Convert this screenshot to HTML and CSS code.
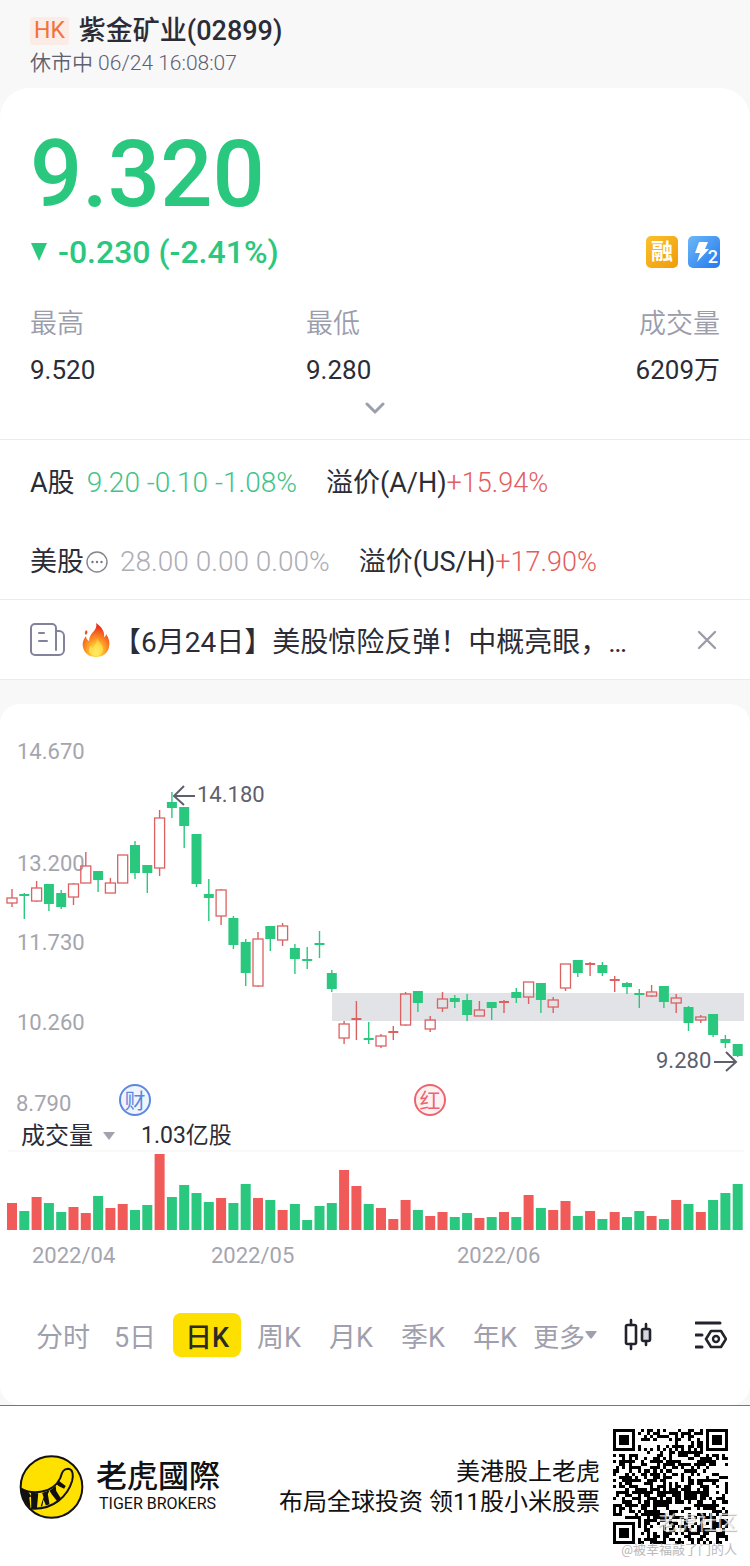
FILE: index.html
```
<!DOCTYPE html>
<html lang="zh-CN">
<head>
  <meta charset="UTF-8" />
  <meta name="viewport" content="width=device-width, initial-scale=1.0"/>
  <title>紫金矿业(02899)</title>
  <link rel="stylesheet" href="styles.css">
</head>
<body>
  <header class="top">
    <div class="top-title">
      <span class="market">HK</span>
      <h1>紫金矿业(02899)</h1>
    </div>
    <p class="top-status">休市中 06/24 16:08:07</p>
  </header>

  <main>
    <section class="card quote">
      <div class="price">9.320</div>
      <div class="change-row">
        <svg class="down" viewBox="0 0 18 20" aria-hidden="true"><path d="M1 1h16L9 19z" fill="#2ac77e"/></svg>
        <span class="change">-0.230 (-2.41%)</span>
        <span class="badge badge-margin">融</span>
        <span class="badge badge-level">
          <svg viewBox="0 0 32 32" aria-hidden="true"><path d="M11 6h9l-3 7h4L9 26l3-9H7z" fill="#fff"/></svg>
          <span class="badge-num">2</span>
        </span>
      </div>

      <dl class="stats">
        <div><dt>最高</dt><dd>9.520</dd></div>
        <div><dt>最低</dt><dd>9.280</dd></div>
        <div><dt>成交量</dt><dd>6209万</dd></div>
      </dl>
      <button class="expand" type="button" aria-label="展开">
        <svg viewBox="0 0 20 12" aria-hidden="true"><path d="M2 2l8 8 8-8" fill="none" stroke="#9b9fac" stroke-width="3" stroke-linecap="round" stroke-linejoin="round"/></svg>
      </button>
    </section>

    <section class="related">
      <div class="related-row">
        <span>A股</span>
        <span class="related-price green">9.20 -0.10 -1.08%</span>
        <span>溢价(A/H)<span class="red">+15.94%</span></span>
      </div>
      <div class="related-row">
        <span>美股</span>
        <svg class="dots" viewBox="0 0 22 22" aria-hidden="true">
          <circle cx="11" cy="11" r="10" fill="none" stroke="#85858c" stroke-width="1.4"/>
          <circle cx="6.5" cy="11" r="1.2" fill="#77777e"/><circle cx="11" cy="11" r="1.2" fill="#77777e"/><circle cx="15.5" cy="11" r="1.2" fill="#77777e"/>
        </svg>
        <span class="related-price grey">28.00 0.00 0.00%</span>
        <span>溢价(US/H)<span class="red">+17.90%</span></span>
      </div>
    </section>

    <section class="news">
      <svg class="news-icon" viewBox="0 0 35 34" aria-hidden="true">
        <g fill="none" stroke="#82839a" stroke-width="2" stroke-linecap="round">
          <path d="M26 8V5a4 4 0 0 0-4-4H5a4 4 0 0 0-4 4v23a4 4 0 0 0 4 4h24a5 5 0 0 0 5-5V13a5 5 0 0 0-5-5h-3v19"/>
          <path d="M9 10h5M9 18h8"/>
        </g>
      </svg>
      <svg class="flame" viewBox="0 0 28 36" aria-hidden="true">
        <defs>
          <radialGradient id="fire" cx="50%" cy="85%" r="75%">
            <stop offset="0" stop-color="#fff36a"/>
            <stop offset="0.3" stop-color="#ffc22e"/>
            <stop offset="0.65" stop-color="#fb7a22"/>
            <stop offset="1" stop-color="#e8321b"/>
          </radialGradient>
        </defs>
        <path d="M14 1c6 4 9 9 8 14 1 0 2-1 2-3 3 4 4 8 3 13-1 6-6 10-13 10S2 31 1 25c-1-5 1-8 3-11 0 2 1 4 3 5 0-4 2-7 5-10 2-3 3-5 2-8z" fill="url(#fire)"/>
        <path d="M4 8c2 1 2 3 0 5-2-2-1-3 0-5z" fill="#f0532a"/>
        <path d="M15 16c1 4 7 7 6 13-1 3-4 5-7 5s-7-2-7-6c0-2 1-4 2-5 0 2 1 3 2 3 2-3 4-5 4-10z" fill="#ffe95a" opacity="0.6"/>
      </svg>
      <a class="news-title" href="#">【6月24日】美股惊险反弹！中概亮眼，…</a>
      <button class="close" type="button" aria-label="关闭">
        <svg viewBox="0 0 20 20" aria-hidden="true"><path d="M2 2l16 16M18 2L2 18" stroke="#9d9da8" stroke-width="2.4" stroke-linecap="round"/></svg>
      </button>
    </section>

    <section class="card chart">
      <svg class="kline" viewBox="0 704 750 418" role="img" aria-label="日K">
        <rect x="332" y="993" width="412" height="28" fill="#e2e3e7"/>
        <g class="axis">
          <text x="17" y="759">14.670</text>
          <text x="17" y="871">13.200</text>
          <text x="17" y="950">11.730</text>
          <text x="17" y="1030">10.260</text>
          <text x="16" y="1111">8.790</text>
        </g>
        <g id="candles"></g>
        <g class="peak">
          <text x="197" y="802">14.180</text>
          <text x="656" y="1068">9.280</text>
          <path d="M195 796h-21M184 786l-10 10 10 9M714 1062h22M726 1052l10 10-10 9"/>
        </g>
        <g class="event event-report">
          <circle cx="135" cy="1100" r="15"/>
          <text x="135" y="1108">财</text>
        </g>
        <g class="event event-dividend">
          <circle cx="430" cy="1100" r="15"/>
          <text x="430" y="1108">红</text>
        </g>
      </svg>
      <div class="volume-head">
        <button class="volume-type" type="button">成交量
          <svg viewBox="0 0 12 8" aria-hidden="true"><path d="M0 0h12L6 8z" fill="#a3a3ad"/></svg>
        </button>
        <span class="volume-total">1.03亿股</span>
      </div>
      <svg class="volume" viewBox="0 0 750 120" role="img" aria-label="成交量">
        <path d="M8 1h736" stroke="#f3f3f5" stroke-width="1"/>
        <g id="bars"></g>
        <g class="axis">
          <text x="32" y="113">2022/04</text>
          <text x="211" y="113">2022/05</text>
          <text x="457" y="113">2022/06</text>
        </g>
      </svg>

      <nav class="periods">
        <button type="button">分时</button>
        <button type="button">5日</button>
        <button type="button" class="active">日K</button>
        <button type="button">周K</button>
        <button type="button">月K</button>
        <button type="button">季K</button>
        <button type="button">年K</button>
        <button type="button" class="more">更多<svg viewBox="0 0 12 8" aria-hidden="true"><path d="M1 0h10q1 0 .5 1L7 7q-1 1-2 0L.5 1Q0 0 1 0z" fill="#9f9fae"/></svg></button>
        <button type="button" aria-label="K线样式">
          <svg class="tool" viewBox="0 0 32 36" aria-hidden="true">
            <g fill="none" stroke="#23232d" stroke-width="2.6" stroke-linecap="round">
              <rect x="3" y="8" width="10" height="19" rx="1.5"/>
              <path d="M8 3v5M8 27v5M23 7v4M23 24v4"/>
              <rect x="19" y="12" width="8" height="12" rx="1.5" fill="#d6d6de"/>
            </g>
          </svg>
        </button>
        <button type="button" aria-label="设置">
          <svg class="tool" viewBox="0 0 32 36" aria-hidden="true">
            <g fill="none" stroke="#23232d" stroke-width="3" stroke-linecap="round" stroke-linejoin="round">
              <path d="M1 6h24M1 18h6M1 30h6"/>
              <path d="M16 14h10l5 8-5 8H16l-5-8z" stroke-width="2.6"/>
              <circle cx="21" cy="22" r="3" stroke-width="2.4"/>
            </g>
          </svg>
        </button>
      </nav>
    </section>
  </main>

  <footer class="brand">
    <svg class="logo" viewBox="58 189 196 198" aria-hidden="true">
      <circle cx="156" cy="288" r="93" fill="#ffe100" stroke="#111" stroke-width="6"/>
      <path d="M64 293C98 312 160 308 182 262C187 250 188 233 206 233C222 235 222 254 218 270C206 312 164 358 94 353" fill="none" stroke="#111" stroke-width="6"/>
      <path d="M64 293l22 9 9 14-6 4 4 32C74 336 64 316 64 293zM94 305l22 2-4 47-17-1zM128 306l22-8-5 12 5 30-11 4-7-18-4 20-5 1 9-28zM150 299l19-14 1 14 14 23-11 9-17-22zM172 280l6-11 5 4 16 12-5 8-17-8z" fill="#111"/>
    </svg>
    <div class="brand-name">
      <strong lang="zh-Hant">老虎國際</strong>
      <span>TIGER BROKERS</span>
    </div>
    <p class="slogan">美港股上老虎<br>布局全球投资 领11股小米股票</p>
    <div class="qr">
      <svg viewBox="0 0 37 37" shape-rendering="crispEdges" role="img" aria-label="二维码"><path id="qrcode"/></svg>
      <span class="mark-name">老虎社区</span>
      <span class="mark-user">@被幸福敲了门的人</span>
    </div>
  </footer>

  <script src="chart.js"></script>
</body>
</html>
```
FILE: styles.css
```
* {
  margin: 0;
  padding: 0;
  box-sizing: border-box;
}

body {
  font-family: Roboto, "Noto Sans CJK SC", sans-serif;
  font-size: 27px;
  background: #f8f8f9;
  color: #2b2c36;
}

button {
  font: inherit;
  color: inherit;
  background: none;
  border: none;
  cursor: pointer;
}

svg {
  display: block;
}

.green {
  color: #42c38a;
}

.red {
  color: #e35d5d;
}

.grey {
  color: #adadb5;
}

/* Header */
.top {
  padding: 14px 30px 10px;
}

.top-title {
  display: flex;
  align-items: center;
  gap: 10px;
  height: 34px;
}

.top-title h1 {
  font-size: 27px;
  line-height: 34px;
  font-weight: 500;
}

.market {
  padding: 0 4px;
  font-size: 23px;
  line-height: 28px;
  color: #f4713c;
  background: #fbece6;
  border-radius: 3px;
}

.top-status {
  font-size: 21px;
  line-height: 30px;
  font-weight: 350;
  color: #5f6070;
}

/* Quote */
.card {
  background: #fff;
  border-radius: 30px 30px 0 0;
}

.quote {
  padding: 32px 30px 25px;
  border-bottom: 1px solid #ececee;
}

.price {
  font-size: 92px;
  line-height: 110px;
  font-weight: 500;
  color: #2ac77e;
}

.change-row {
  display: flex;
  align-items: center;
  gap: 10px;
  height: 44px;
}

.down {
  width: 18px;
  height: 20px;
}

.change {
  flex: 1;
  font-size: 32px;
  font-weight: 500;
  color: #2ac77e;
}

.badge {
  position: relative;
  width: 32px;
  height: 32px;
  border-radius: 5px;
  color: #fff;
  text-align: center;
}

.badge-margin {
  font-size: 22px;
  line-height: 32px;
  font-weight: 700;
  background: linear-gradient(135deg, #fbc02b, #f09b0b);
}

.badge-level {
  background: linear-gradient(135deg, #6cb8f8, #2478ee);
}

.badge-num {
  position: absolute;
  right: 2px;
  bottom: 2px;
  font-size: 18px;
  line-height: 18px;
  font-weight: 500;
}

.stats {
  display: flex;
  padding-top: 28px;
}

.stats div {
  flex: 2;
}

.stats div:last-child {
  flex: 1;
  text-align: right;
}

.stats dt {
  line-height: 44px;
  font-weight: 350;
  color: #9c9dab;
}

.stats dd {
  font-size: 26px;
  line-height: 48px;
}

.expand {
  display: block;
  margin: 8px auto 0;
}

.expand svg {
  width: 20px;
  height: 12px;
}

/* Related listings */
.related {
  background: #fff;
  padding-top: 1px;
  border-bottom: 1px solid #ececee;
}

.related-row {
  display: flex;
  align-items: center;
  height: 79px;
  padding: 4px 30px 0;
  line-height: 40px;
}

.related-price {
  margin: 0 29px 0 12px;
  font-size: 28px;
  font-weight: 300;
}

.related-row .red {
  font-weight: 300;
}

.dots {
  width: 22px;
  height: 22px;
  margin-left: 2px;
}

/* News */
.news {
  display: flex;
  align-items: center;
  height: 80px;
  padding: 0 33px 0 30px;
  background: #fff;
  border-bottom: 1px solid #ececee;
}

.news-icon {
  width: 35px;
  height: 34px;
}

.flame {
  width: 28px;
  height: 36px;
  margin: 0 3px 0 17px;
}

.news-title {
  flex: 1;
  font-size: 28px;
  color: inherit;
  text-decoration: none;
  white-space: nowrap;
}

.close svg {
  width: 20px;
  height: 20px;
}

/* Chart */
.chart {
  margin-top: 24px;
  padding-bottom: 48px;
  border-radius: 20px;
}

.kline,
.volume {
  width: 100%;
}

.axis text {
  font-size: 22px;
  fill: #a5a5ae;
}

.peak text {
  font-size: 22px;
  fill: #5e5f6d;
}

.peak path {
  fill: none;
  stroke: #5e5f6d;
  stroke-width: 2;
}

.event circle {
  stroke-width: 2;
}

.event text {
  font-size: 21px;
  text-anchor: middle;
}

.event-report circle {
  fill: #eff5fe;
  stroke: #5c87df;
}

.event-report text {
  fill: #5c87df;
}

.event-dividend circle {
  fill: #fef1f2;
  stroke: #ec6470;
}

.event-dividend text {
  fill: #ec6470;
}

.volume-head {
  display: flex;
  align-items: center;
  gap: 26px;
  height: 28px;
  padding-left: 21px;
  font-size: 24px;
  line-height: 28px;
}

.volume-total {
  font-size: 23px;
}

.volume-type {
  display: flex;
  align-items: center;
  gap: 10px;
}

.volume-type svg,
.more svg {
  width: 12px;
  height: 8px;
}

.periods {
  display: grid;
  grid-template-columns: repeat(10, 1fr);
  padding: 43px 3px 0 27px;
}

.periods button {
  display: flex;
  align-items: center;
  justify-content: center;
  height: 44px;
  margin: 0 2px;
  border-radius: 8px;
  white-space: nowrap;
  color: #9f9fae;
}

.periods .active {
  background: #fde000;
  color: #2b2c22;
  font-weight: 500;
}

.periods .more {
  justify-content: flex-start;
  font-size: 26px;
}

.tool {
  width: 32px;
  height: 36px;
}

/* Footer */
.brand {
  display: flex;
  align-items: center;
  padding: 23px 22px 22px 19px;
  background: #fff;
  border-top: 1px solid #77777a;
  color: #111;
}

.logo {
  width: 65px;
  height: 66px;
}

.brand-name {
  display: flex;
  flex-direction: column;
  margin-left: 12px;
}

.brand-name strong {
  font-family: Roboto, "Noto Sans CJK TC", sans-serif;
  font-size: 31px;
  line-height: 34px;
  font-weight: 500;
}

.brand-name span {
  padding-left: 3px;
  font-size: 16px;
  line-height: 20px;
}

.slogan {
  flex: 1;
  margin-right: 13px;
  font-size: 24px;
  line-height: 30px;
  text-align: right;
}

.qr {
  position: relative;
  width: 115px;
  height: 115px;
}

.mark-name,
.mark-user {
  position: absolute;
  white-space: nowrap;
}

.mark-name {
  right: -9px;
  bottom: 8px;
  font-size: 20px;
  line-height: 26px;
  color: rgba(255, 255, 255, 0.7);
  text-shadow: 1px 1px 1px rgba(120, 120, 120, 0.5);
}

.mark-user {
  right: -9px;
  bottom: -16px;
  font-size: 13px;
  line-height: 20px;
  color: #b9b9b9;
}
```
FILE: chart.js
```
// dir, high, low, body top, body bottom, volume
const days = [
  ['r', 889, 907, 898, 903, 27], ['g', 893, 919, 894, 896, 19], ['r', 881, 902, 888, 901, 33],
  ['g', 884, 911, 884, 904, 27], ['g', 890, 909, 893, 907, 18], ['r', 883, 905, 884, 897, 23],
  ['r', 852, 883, 866, 883, 17], ['g', 871, 892, 871, 880, 34], ['r', 878, 893, 883, 893, 22],
  ['r', 855, 883, 855, 883, 26], ['g', 841, 879, 845, 873, 20], ['g', 865, 893, 865, 873, 25],
  ['r', 810, 876, 818, 868, 76], ['g', 792, 818, 802, 808, 33], ['g', 807, 848, 807, 826, 45],
  ['g', 834, 887, 834, 884, 37], ['g', 879, 921, 894, 898, 28], ['r', 889, 925, 890, 916, 32],
  ['g', 916, 949, 918, 945, 27], ['g', 939, 986, 942, 973, 46], ['r', 932, 987, 939, 986, 32],
  ['g', 926, 951, 926, 939, 30], ['r', 923, 946, 926, 940, 20], ['g', 944, 974, 948, 959, 26],
  ['g', 947, 969, 959, 961, 10], ['g', 931, 958, 943, 945, 24], ['g', 970, 992, 973, 989, 27],
  ['r', 1021, 1044, 1024, 1038, 60], ['r', 1001, 1040, 1018, 1020, 44], ['g', 1022, 1044, 1038, 1040, 26],
  ['r', 1034, 1048, 1036, 1046, 22], ['r', 1026, 1040, 1031, 1033, 11], ['r', 992, 1026, 994, 1025, 30],
  ['g', 991, 1012, 991, 1003, 20], ['r', 1016, 1032, 1020, 1029, 14], ['r', 992, 1012, 999, 1008, 18],
  ['g', 995, 1008, 998, 1002, 13], ['g', 994, 1021, 1000, 1015, 17], ['r', 1001, 1016, 1010, 1016, 12],
  ['g', 1002, 1020, 1002, 1008, 13], ['r', 1000, 1013, 1001, 1003, 18], ['g', 988, 1003, 992, 998, 13],
  ['r', 982, 1004, 982, 997, 35], ['g', 983, 1013, 983, 1000, 22], ['r', 997, 1013, 1000, 1007, 20],
  ['r', 964, 991, 964, 988, 29], ['g', 960, 977, 960, 973, 14], ['r', 962, 976, 963, 965, 19],
  ['g', 962, 976, 965, 973, 11], ['r', 976, 992, 979, 981, 18], ['g', 982, 994, 983, 987, 13],
  ['g', 989, 1008, 993, 995, 19], ['r', 985, 997, 992, 996, 14], ['g', 986, 1008, 986, 1002, 11],
  ['r', 994, 1013, 998, 1003, 30], ['g', 1006, 1031, 1007, 1023, 26], ['r', 1015, 1023, 1017, 1020, 18],
  ['g', 1014, 1037, 1014, 1035, 30], ['g', 1035, 1048, 1039, 1043, 37], ['g', 1044, 1057, 1044, 1056, 46]
];

const green = '#2ac77e';
const red = '#f05a58';
const redLine = '#dc6161';
let candles = '';
let bars = '';

days.forEach(([dir, high, low, top, bottom, vol], i) => {
  const x = 12 + i * 12.3;
  const flat = bottom - top < 3;
  if (dir === 'g' || flat) {
    const color = dir === 'g' ? green : redLine;
    candles += `<path d="M${x} ${high}V${low}" stroke="${color}" stroke-width="1.4"/>`;
    candles += `<rect x="${x - 5}" y="${top}" width="10" height="${bottom - top}" fill="${color}"/>`;
  } else {
    // hollow body, wick only outside of it
    candles += `<path d="M${x} ${high}V${top}M${x} ${bottom}V${low}" stroke="${redLine}" stroke-width="1.4"/>`;
    candles += `<rect x="${x - 5}" y="${top}" width="10" height="${bottom - top}" fill="none" stroke="${redLine}" stroke-width="1.3"/>`;
  }
  bars += `<rect x="${x - 5}" y="${80 - vol}" width="10" height="${vol}" fill="${dir === 'g' ? green : red}"/>`;
});

document.getElementById('candles').innerHTML = candles;
document.getElementById('bars').innerHTML = bars;

// QR modules
const size = 37;

function finder(x, y) {
  const d = Math.max(Math.abs(x - 3), Math.abs(y - 3));
  return d !== 2 && d < 4;
}

let seed = 2899;
let path = '';
for (let y = 0; y < size; y++) {
  for (let x = 0; x < size; x++) {
    seed = (seed * 1103515245 + 12345) % 2147483648;
    let dark = seed / 2147483648 > 0.5;
    if (x < 8 && y < 8) dark = finder(x, y);
    else if (x > 28 && y < 8) dark = finder(x - 30, y);
    else if (x < 8 && y > 28) dark = finder(x, y - 30);
    else if (Math.abs(x - 30) < 3 && Math.abs(y - 30) < 3) dark = Math.max(Math.abs(x - 30), Math.abs(y - 30)) !== 1;
    else if (x === 6 || y === 6) dark = (x + y) % 2 === 0;
    if (dark) path += `M${x} ${y}h1v1h-1z`;
  }
}
document.getElementById('qrcode').setAttribute('d', path);
```
